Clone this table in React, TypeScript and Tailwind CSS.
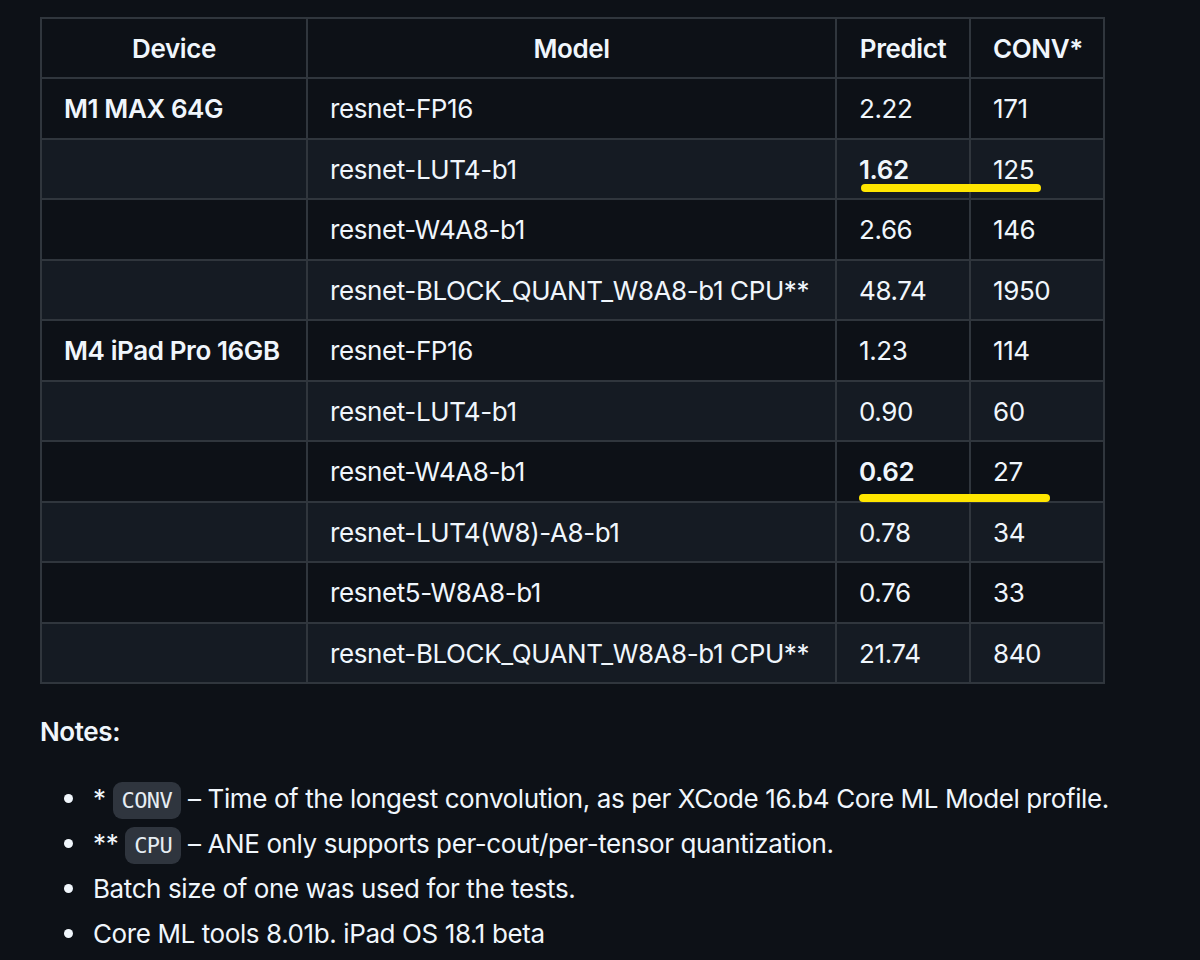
import React from 'react'

type Row = { device?: string; model: string; predict: string; conv: string; bold?: boolean }

const rows: Row[] = [
  { device: 'M1 MAX 64G', model: 'resnet-FP16', predict: '2.22', conv: '171' },
  { model: 'resnet-LUT4-b1', predict: '1.62', conv: '125', bold: true },
  { model: 'resnet-W4A8-b1', predict: '2.66', conv: '146' },
  { model: 'resnet-BLOCK_QUANT_W8A8-b1 CPU**', predict: '48.74', conv: '1950' },
  { device: 'M4 iPad Pro 16GB', model: 'resnet-FP16', predict: '1.23', conv: '114' },
  { model: 'resnet-LUT4-b1', predict: '0.90', conv: '60' },
  { model: 'resnet-W4A8-b1', predict: '0.62', conv: '27', bold: true },
  { model: 'resnet-LUT4(W8)-A8-b1', predict: '0.78', conv: '34' },
  { model: 'resnet5-W8A8-b1', predict: '0.76', conv: '33' },
  { model: 'resnet-BLOCK_QUANT_W8A8-b1 CPU**', predict: '21.74', conv: '840' },
]

const Code = ({ children }: { children: React.ReactNode }) => (
  <code className="rounded-[9px] bg-[#2f353e] px-[9px] py-[6px] font-['DejaVu_Sans_Mono',monospace] text-[22px] leading-[26px] tracking-[-0.6px] text-[#e6edf3]">
    {children}
  </code>
)

const Item = ({ children, first }: { children: React.ReactNode; first?: boolean }) => (
  <li className={`flex items-center ${first ? '' : 'mt-[6px]'}`}>
    <span className="mr-[20px] h-[9px] w-[9px] shrink-0 rounded-full bg-[#f0f6fc]" />
    <span>{children}</span>
  </li>
)

const cell = 'border-2 border-[#30363d] px-[22px] whitespace-nowrap'

const App: React.FC = () => {
  return (
    <div className="relative min-h-[960px] w-[1200px] overflow-hidden bg-[#0d1117] pl-[40px] pt-[17px] font-['Inter',sans-serif] text-[26px] leading-[39px] tracking-[-0.4px] text-[#f0f6fc]">
      <table className="w-[1063px] table-fixed border-collapse">
        <colgroup>
          <col className="w-[266px]" />
          <col className="w-[529px]" />
          <col className="w-[134px]" />
          <col className="w-[134px]" />
        </colgroup>
        <thead>
          <tr className="h-[60px]">
            {['Device', 'Model', 'Predict', 'CONV*'].map(h => (
              <th key={h} className={`${cell} text-center font-semibold`}>
                {h}
              </th>
            ))}
          </tr>
        </thead>
        <tbody>
          {rows.map((r, i) => (
            <tr key={i} className={i % 2 === 1 ? 'h-[60px] bg-[#151b23]' : 'h-[61px]'}>
              <td className={`${cell} font-semibold`}>{r.device}</td>
              <td className={cell}>{r.model}</td>
              <td className={`${cell} ${r.bold ? 'font-semibold' : ''}`}>{r.predict}</td>
              <td className={cell}>{r.conv}</td>
            </tr>
          ))}
        </tbody>
      </table>

      <p className="mt-[28px] font-semibold">Notes:</p>

      <ul className="mt-[28px] pl-[24px]">
        <Item first>
          * <Code>CONV</Code> – Time of the longest convolution, as per XCode 16.b4 Core ML Model profile.
        </Item>
        <Item>
          ** <Code>CPU</Code> – ANE only supports per-cout/per-tensor quantization.
        </Item>
        <Item>Batch size of one was used for the tests.</Item>
        <Item>Core ML tools 8.01b. iPad OS 18.1 beta</Item>
      </ul>

      {/* yellow highlight marks */}
      <div className="absolute left-[861px] top-[184px] h-[8px] w-[180px] rounded-full bg-[#ffe600]" />
      <div className="absolute left-[859px] top-[494px] h-[8px] w-[191px] rounded-full bg-[#ffe600]" />
    </div>
  )
}

export default App
